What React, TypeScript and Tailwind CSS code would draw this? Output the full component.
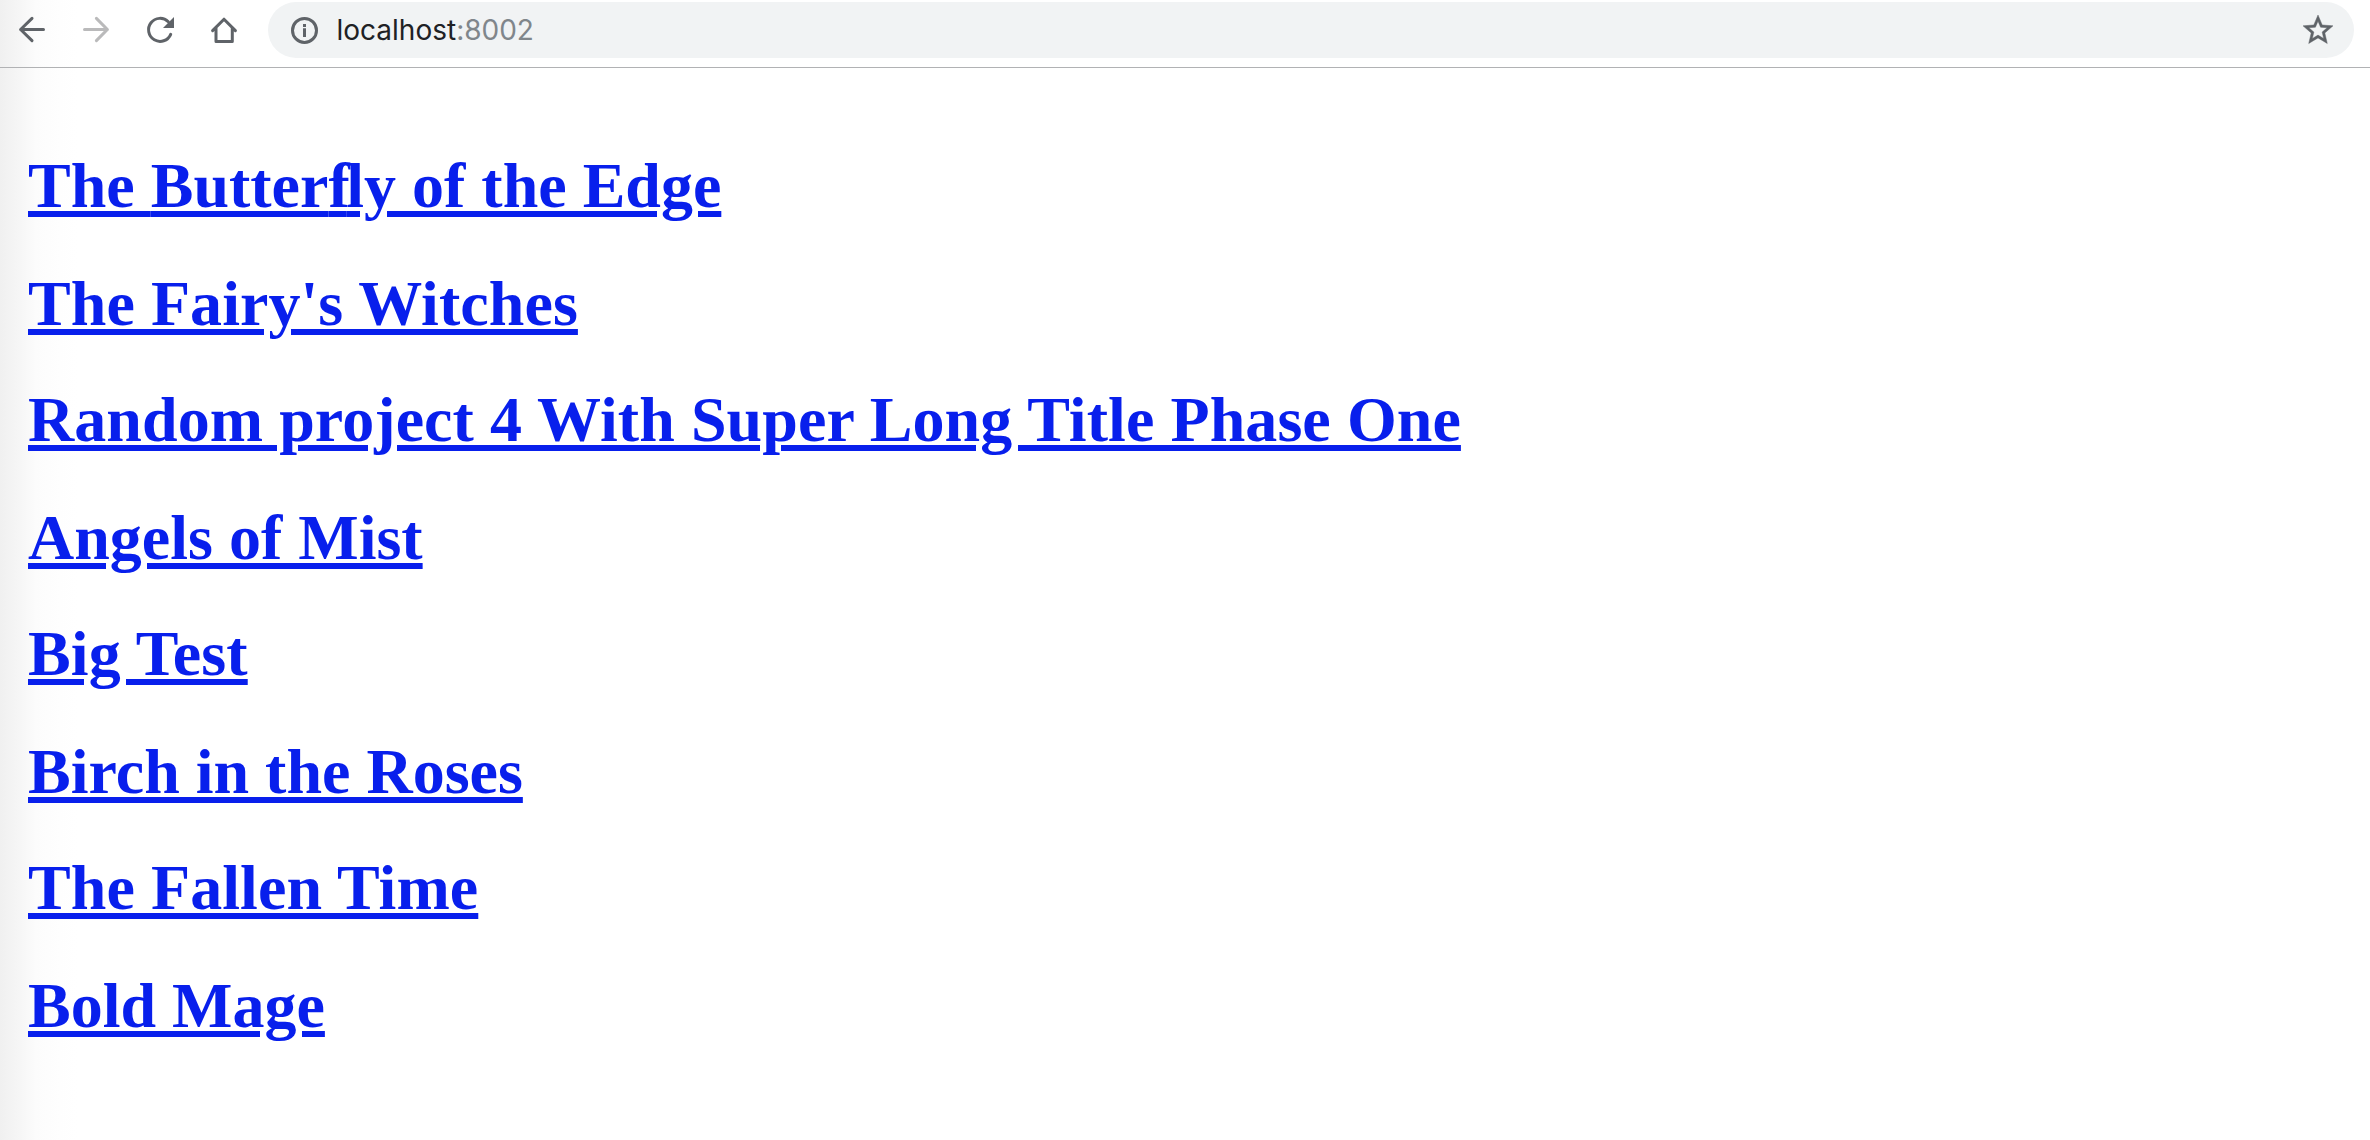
import type { ReactNode } from 'react';

const titles: { id: string; text: ReactNode; tracking: string }[] = [
  {
    id: 'butterfly',
    text: (
      <>
        Butter<span className="tracking-[-3.5px]">f</span>ly of the Edge
      </>
    ),
    tracking: '',
  },
  { id: 'fairy', text: "The Fairy's Witches", tracking: 'tracking-[0.06px]' },
  { id: 'random', text: 'Random project 4 With Super Long Title Phase One', tracking: 'tracking-[0.07px]' },
  { id: 'angels', text: 'Angels of Mist', tracking: '' },
  { id: 'big', text: 'Big Test', tracking: 'tracking-[0.12px]' },
  { id: 'birch', text: 'Birch in the Roses', tracking: '' },
  { id: 'fallen', text: 'The Fallen Time', tracking: 'tracking-[0.07px]' },
  { id: 'bold', text: 'Bold Mage', tracking: '' },
];
titles[0].text = <>The {titles[0].text}</>;

const stroke = { fill: 'none', stroke: 'currentColor', strokeWidth: 3, strokeLinecap: 'round', strokeLinejoin: 'round' } as const;

function BackIcon() {
  return (
    <svg viewBox="0 0 32 32" className="size-8" {...stroke}>
      <path d="M27.5 15.5H4.6M16 4.4 4.6 15.5 16 26.6" />
    </svg>
  );
}

function ForwardIcon() {
  return (
    <svg viewBox="0 0 32 32" className="size-8 text-[#bababb]" {...stroke}>
      <path d="M4.5 15.5H27.4M16.4 4.4 27.4 15.5 16.4 26.6" />
    </svg>
  );
}

function ReloadIcon() {
  return (
    <svg viewBox="0 0 32 32" className="size-8" {...stroke}>
      <path d="M26.7 20.3A11.5 11.5 0 1 1 24.3 7.8" />
      <path d="M30 3V14H19Z" fill="currentColor" stroke="none" />
    </svg>
  );
}

function HomeIcon() {
  return (
    <svg viewBox="0 0 32 32" className="size-8" {...stroke}>
      <path d="M4.6 16.6 16 5.2 27.4 16.6M8 14V27.5H24.3V14" />
    </svg>
  );
}

export default function App() {
  return (
    <div className="flex h-[1140px] w-[2370px] flex-col overflow-hidden bg-white bg-[linear-gradient(to_right,#f0f0f0_0px,#f6f6f6_20px,#fcfcfc_36px,#fefefe_60px,#ffffff_78px)]">
      <header className="flex h-[68px] shrink-0 items-start border-b border-[#b1b2b4]">
        <nav className="mt-3.5 flex w-[268px] shrink-0 items-center gap-8 pl-4 text-[#5f6368]">
          <BackIcon />
          <ForwardIcon />
          <ReloadIcon />
          <HomeIcon />
        </nav>
        <div className="mt-0.5 flex h-14 w-[2086px] items-center rounded-full bg-[#f1f3f4] pr-[18px] pl-5">
          <svg viewBox="0 0 32 32" className="size-8 text-[#5f6368]">
            <circle cx="16.5" cy="16.4" r="12" fill="none" stroke="currentColor" strokeWidth="3" />
            <path d="M15 10h3v3h-3zM15 14.3h3v8.6h-3z" fill="currentColor" />
          </svg>
          <span className="ml-[16.5px] grow font-['Inter',sans-serif] text-[28px] leading-8 text-[#202124]">
            localhost<span className="text-[#80868b]">:8002</span>
          </span>
          <svg viewBox="0 0 24 24" className="size-9 fill-[#5f6368]">
            <path d="M22 9.24l-7.19-.62L12 2 9.19 8.63 2 9.24l5.46 4.73L5.82 21 12 17.27 18.18 21l-1.63-7.03L22 9.24zM12 15.4l-3.76 2.27 1-4.28-3.32-2.88 4.38-.38L12 6.1l1.71 4.04 4.38.38-3.32 2.88 1 4.28L12 15.4z" stroke="#5f6368" strokeWidth="0.3" />
          </svg>
        </div>
      </header>
      <main className="flex grow flex-col pt-[81px] pl-7">
        {titles.map(({ id, text, tracking }) => (
          <h2 key={id} className="h-[74px] font-['Liberation_Serif',serif] text-[64px] leading-[74px] font-bold whitespace-nowrap odd:mb-11 even:mb-[42px]">
            <a className={`text-[#081fec] underline decoration-[6px] underline-offset-[4px] ${tracking}`}>{text}</a>
          </h2>
        ))}
      </main>
    </div>
  );
}
